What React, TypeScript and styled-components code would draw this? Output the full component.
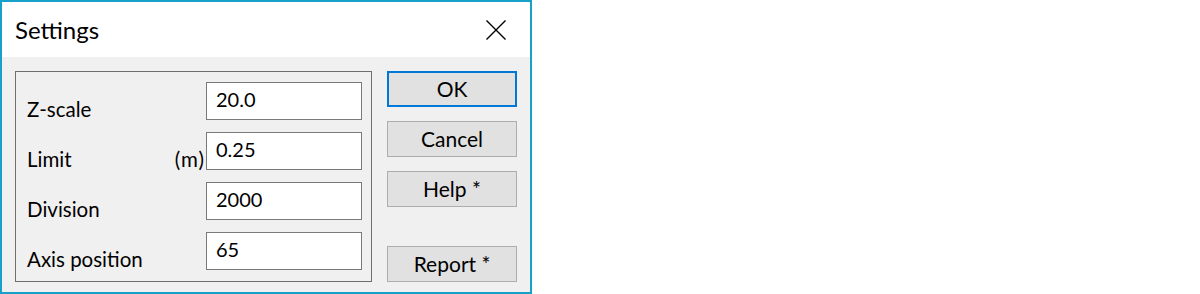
import styled, {createGlobalStyle} from "styled-components";

const GlobalStyle = createGlobalStyle`
  html, body {
    margin: 0;
    padding: 0;
    background: #ffffff;
  }
  body {
    font-family: Lato, "Noto Sans", sans-serif;
    color: #000000;
  }
`;

const Window = styled.div`
  width: 532px;
  height: 294px;
  box-sizing: border-box;
  border: 2px solid #18a1c8;
  background: #f0f0f0;
  display: flex;
  flex-direction: column;
`;

const TitleBar = styled.div`
  height: 56px;
  background: #ffffff;
  display: flex;
  align-items: center;
  justify-content: space-between;
  padding: 0 24px 0 13px;
`;

const Title = styled.span`
  font-size: 24px;
  line-height: 1;
  margin-top: 1px;
`;

const CloseIcon = styled.svg`
  width: 20px;
  height: 20px;
  display: block;
  margin-top: 0;
`;

const Body = styled.div`
  flex: 1;
  display: flex;
  gap: 15px;
  padding: 14px 13px 10px 13px;
`;

const Group = styled.div`
  width: 357px;
  box-sizing: border-box;
  border: 1px solid #6e6e6e;
  padding: 10px 9px 10px 11px;
  display: grid;
  grid-template-columns: 1fr auto 156px;
  grid-auto-rows: 38px;
  row-gap: 12px;
`;

const Label = styled.span`
  font-size: 20.5px;
  line-height: 22px;
  align-self: end;
  margin-bottom: 0;
  white-space: nowrap;
`;

const Unit = styled(Label)`
  padding-right: 1px;
  letter-spacing: 1px;
`;

const Field = styled.div`
  box-sizing: border-box;
  border: 1px solid #7a7a7a;
  background: #ffffff;
  font-size: 20px;
  line-height: 22px;
  padding: 5px 9px 0 9px;
`;

const Buttons = styled.div`
  width: 130px;
  display: flex;
  flex-direction: column;
  gap: 14px;
`;

const Button = styled.button<{ $primary?: boolean; $pushDown?: boolean }>`
  height: 36px;
  box-sizing: border-box;
  margin: 0;
  margin-top: ${p => (p.$pushDown ? "25px" : "0")};
  padding: 0 0 1px 0;
  border: ${p => (p.$primary ? "2px solid #0078d7" : "1px solid #adadad")};
  background: #e1e1e1;
  font-family: Lato, "Noto Sans", sans-serif;
  font-size: 21px;
  color: #000000;
  text-align: center;
`;

const fields = [
  {label: "Z-scale", value: "20.0"},
  {label: "Limit", unit: "(m)", value: "0.25"},
  {label: "Division", value: "2000"},
  {label: "Axis position", value: "65"},
];

export default function App() {
  return (
    <>
      <GlobalStyle/>
      <Window>
        <TitleBar>
          <Title>Settings</Title>
          <CloseIcon viewBox="0 0 20 20">
            <path d="M0.5 0.5 L19.5 19.5 M19.5 0.5 L0.5 19.5" stroke="#000" strokeWidth="1.4" fill="none"/>
          </CloseIcon>
        </TitleBar>
        <Body>
          <Group>
            {fields.map(f => (
              <Row key={f.label} {...f}/>
            ))}
          </Group>
          <Buttons>
            <Button $primary>OK</Button>
            <Button>Cancel</Button>
            <Button>Help *</Button>
            <Button $pushDown>Report *</Button>
          </Buttons>
        </Body>
      </Window>
    </>
  );
}

const Row = ({label, unit, value}: { label: string; unit?: string; value: string }) => (
  <>
    <Label>{label}</Label>
    <Unit>{unit ?? ""}</Unit>
    <Field>{value}</Field>
  </>
);
